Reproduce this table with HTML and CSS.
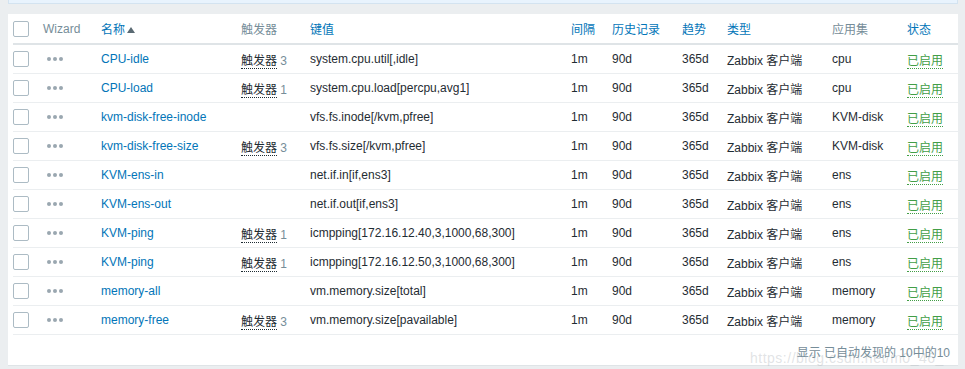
FILE: index.html
```html
<!DOCTYPE html>
<html lang="zh">
<head>
<meta charset="utf-8">
<title>监控项</title>
<link rel="stylesheet" href="styles.css">
</head>
<body>
<div class="filter-strip"></div>
<div class="panel">
  <table class="list">
    <colgroup>
      <col class="c-cb"><col class="c-wiz"><col class="c-name"><col class="c-trg"><col class="c-key">
      <col class="c-int"><col class="c-hist"><col class="c-trend"><col class="c-type"><col class="c-app"><col class="c-status">
    </colgroup>
    <thead>
      <tr>
        <th><span class="cb"></span></th>
        <th class="muted">Wizard</th>
        <th><a class="sort">名称</a><span class="arrow"></span></th>
        <th class="muted">触发器</th>
        <th><a class="sort">键值</a></th>
        <th><a class="sort">间隔</a></th>
        <th><a class="sort">历史记录</a></th>
        <th><a class="sort">趋势</a></th>
        <th><a class="sort">类型</a></th>
        <th class="muted">应用集</th>
        <th><a class="sort">状态</a></th>
      </tr>
    </thead>
    <tbody>
      <tr><td><span class="cb"></span></td><td><span class="dots"><i></i><i></i><i></i></span></td><td><a class="link">CPU-idle</a></td><td><a class="trg">触发器</a> <span class="cnt">3</span></td><td>system.cpu.util[,idle]</td><td>1m</td><td>90d</td><td>365d</td><td>Zabbix 客户端</td><td>cpu</td><td><a class="on">已启用</a></td></tr>
      <tr><td><span class="cb"></span></td><td><span class="dots"><i></i><i></i><i></i></span></td><td><a class="link">CPU-load</a></td><td><a class="trg">触发器</a> <span class="cnt">1</span></td><td>system.cpu.load[percpu,avg1]</td><td>1m</td><td>90d</td><td>365d</td><td>Zabbix 客户端</td><td>cpu</td><td><a class="on">已启用</a></td></tr>
      <tr><td><span class="cb"></span></td><td><span class="dots"><i></i><i></i><i></i></span></td><td><a class="link">kvm-disk-free-inode</a></td><td></td><td>vfs.fs.inode[/kvm,pfree]</td><td>1m</td><td>90d</td><td>365d</td><td>Zabbix 客户端</td><td>KVM-disk</td><td><a class="on">已启用</a></td></tr>
      <tr><td><span class="cb"></span></td><td><span class="dots"><i></i><i></i><i></i></span></td><td><a class="link">kvm-disk-free-size</a></td><td><a class="trg">触发器</a> <span class="cnt">3</span></td><td>vfs.fs.size[/kvm,pfree]</td><td>1m</td><td>90d</td><td>365d</td><td>Zabbix 客户端</td><td>KVM-disk</td><td><a class="on">已启用</a></td></tr>
      <tr><td><span class="cb"></span></td><td><span class="dots"><i></i><i></i><i></i></span></td><td><a class="link">KVM-ens-in</a></td><td></td><td>net.if.in[if,ens3]</td><td>1m</td><td>90d</td><td>365d</td><td>Zabbix 客户端</td><td>ens</td><td><a class="on">已启用</a></td></tr>
      <tr><td><span class="cb"></span></td><td><span class="dots"><i></i><i></i><i></i></span></td><td><a class="link">KVM-ens-out</a></td><td></td><td>net.if.out[if,ens3]</td><td>1m</td><td>90d</td><td>365d</td><td>Zabbix 客户端</td><td>ens</td><td><a class="on">已启用</a></td></tr>
      <tr><td><span class="cb"></span></td><td><span class="dots"><i></i><i></i><i></i></span></td><td><a class="link">KVM-ping</a></td><td><a class="trg">触发器</a> <span class="cnt">1</span></td><td>icmpping[172.16.12.40,3,1000,68,300]</td><td>1m</td><td>90d</td><td>365d</td><td>Zabbix 客户端</td><td>ens</td><td><a class="on">已启用</a></td></tr>
      <tr><td><span class="cb"></span></td><td><span class="dots"><i></i><i></i><i></i></span></td><td><a class="link">KVM-ping</a></td><td><a class="trg">触发器</a> <span class="cnt">1</span></td><td>icmpping[172.16.12.50,3,1000,68,300]</td><td>1m</td><td>90d</td><td>365d</td><td>Zabbix 客户端</td><td>ens</td><td><a class="on">已启用</a></td></tr>
      <tr><td><span class="cb"></span></td><td><span class="dots"><i></i><i></i><i></i></span></td><td><a class="link">memory-all</a></td><td></td><td>vm.memory.size[total]</td><td>1m</td><td>90d</td><td>365d</td><td>Zabbix 客户端</td><td>memory</td><td><a class="on">已启用</a></td></tr>
      <tr><td><span class="cb"></span></td><td><span class="dots"><i></i><i></i><i></i></span></td><td><a class="link">memory-free</a></td><td><a class="trg">触发器</a> <span class="cnt">3</span></td><td>vm.memory.size[pavailable]</td><td>1m</td><td>90d</td><td>365d</td><td>Zabbix 客户端</td><td>memory</td><td><a class="on">已启用</a></td></tr>
    </tbody>
  </table>
  <div class="footer">
    <span class="watermark">https://blog.csdn.net/m0_46_</span>
    <span class="stats">显示 已自动发现的 10中的10</span>
  </div>
</div>
</body>
</html>
```

FILE: styles.css
```css
html, body {
  margin: 0;
  padding: 0;
}
body {
  background: #ebeef0;
  font-family: "Liberation Sans", Arial, "Noto Sans CJK SC", sans-serif;
  font-size: 12px;
  color: #1f2c33;
  width: 965px;
  height: 369px;
  overflow: hidden;
}
.filter-strip {
  margin: 0 7px 0 8px;
  height: 3px;
  background: #e8f3fd;
  border: 1px solid #d3e3f0;
  border-top: none;
}
.panel {
  margin: 10px 7px 0 8px;
  background: #fff;
  border-bottom: 1px solid #dfe4e7;
  height: 351px;
  position: relative;
}
.list {
  border-collapse: collapse;
  table-layout: fixed;
  width: 945px;
  margin-left: 5px;
}
.c-cb { width: 30px; }
.c-wiz { width: 58px; }
.c-name { width: 140px; }
.c-trg { width: 69px; }
.c-key { width: 261px; }
.c-int { width: 41px; }
.c-hist { width: 70px; }
.c-trend { width: 45px; }
.c-type { width: 105px; }
.c-app { width: 75px; }
.c-status { width: 51px; }
.list th {
  height: 29px;
  padding: 0;
  text-align: left;
  font-weight: normal;
  white-space: nowrap;
  border-bottom: 2px solid #dfe4e7;
  vertical-align: middle;
}
.list td {
  height: 28px;
  padding: 0;
  white-space: nowrap;
  border-bottom: 1px solid #ebeef0;
  vertical-align: middle;
}
.list th.muted { color: #768d99; }
.sort { color: #0275b8; }
.arrow {
  display: inline-block;
  width: 0;
  height: 0;
  margin-left: 2px;
  border-left: 4px solid transparent;
  border-right: 4px solid transparent;
  border-bottom: 6px solid #5a6a73;
  vertical-align: 1px;
}
.cb {
  display: block;
  width: 14px;
  height: 14px;
  border: 1px solid #acbbc4;
  border-radius: 2px;
  background: #fff;
}
.dots {
  display: flex;
  gap: 2px;
  margin-left: 4px;
}
.dots i {
  display: block;
  width: 4px;
  height: 4px;
  border-radius: 50%;
  background: #9aa7b0;
}
.link { color: #0275b8; }
.trg {
  color: #1f2c33;
  border-bottom: 1px dotted #1f2c33;
}
.cnt { color: #768d99; }
.on {
  color: #429e47;
  border-bottom: 1px dotted #429e47;
}
.footer {
  height: 31px;
  display: flex;
  justify-content: flex-end;
  align-items: center;
  padding-right: 8px;
  padding-top: 1px;
}
.stats {
  color: #768d99;
  position: relative;
}
.watermark {
  position: absolute;
  left: 742px;
  top: 336px;
  font-size: 14px;
  color: rgba(180, 185, 190, 0.4);
  letter-spacing: 0.5px;
}
```
